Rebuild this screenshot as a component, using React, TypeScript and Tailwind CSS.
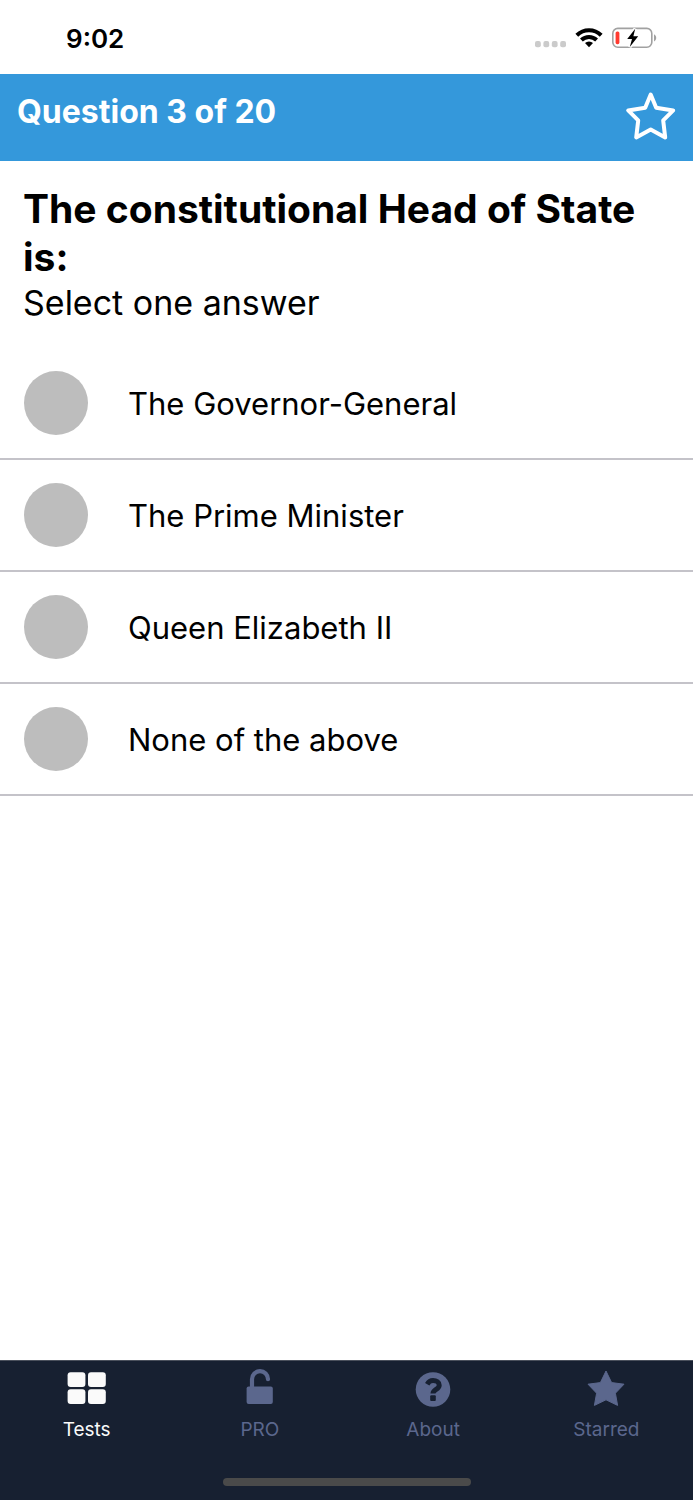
import { useState } from "react";

const answers = [
  "The Governor-General",
  "The Prime Minister",
  "Queen Elizabeth II",
  "None of the above",
];

function SignalDots() {
  return (
    <svg viewBox="0 0 32 8" className="h-2 w-8" fill="#cbcbcb" aria-hidden="true">
      <rect x="0" y="1" width="5.8" height="6.2" rx="2" />
      <rect x="8.4" y="1" width="5.8" height="6.2" rx="2" />
      <rect x="16.8" y="1" width="5.8" height="6.2" rx="2" />
      <rect x="25.2" y="1" width="5.8" height="6.2" rx="2" />
    </svg>
  );
}

function WifiIcon() {
  return (
    <svg viewBox="0 0 28 20" className="h-5 w-7" aria-hidden="true">
      <g fill="none" stroke="#000" strokeWidth="4">
        <path d="M1.8 7.2a17.4 17.4 0 0 1 24.4 0" />
        <path d="M6.4 12a10.9 10.9 0 0 1 15.2 0" />
      </g>
      <path d="M14 19.2l-4-4.2a5.8 5.8 0 0 1 8 0z" />
    </svg>
  );
}

function BatteryIcon() {
  return (
    <svg viewBox="0 0 46 24" className="h-6 w-[46px]" aria-hidden="true">
      <rect x="1.8" y="2.4" width="39" height="18.8" rx="5" fill="none" stroke="#a1a1a1" strokeWidth="1.6" />
      <path d="M43 8.2c1.4.7 2.2 2 2.2 3.6s-.8 2.9-2.2 3.6z" fill="#a1a1a1" />
      <rect x="4.6" y="5.4" width="3.8" height="12.8" rx="1.6" fill="#ff3b30" />
      <path
        d="M24.2 2.8L16.2 13h4.8L18.8 21l8.4-10.8h-4.8z"
        fill="#000"
        stroke="#fff"
        strokeWidth="3.4"
        paintOrder="stroke"
      />
    </svg>
  );
}

function StarOutlineIcon() {
  return (
    <svg viewBox="0 0 52 52" className="size-[52px]" aria-hidden="true">
      <path
        d="M25.7 4.6L31.2 17.8 48.2 20.4 38.2 30.4 40.2 47.4 25.7 39.4 11.2 47.4 13.2 30.4 3.2 20.4 20.2 17.8z"
        fill="none"
        stroke="#fff"
        strokeWidth="4"
        strokeLinejoin="round"
      />
    </svg>
  );
}

function GridIcon() {
  return (
    <svg viewBox="0 0 40 40" className="size-10" fill="currentColor" aria-hidden="true">
      <rect x="0.6" y="4.2" width="17.8" height="14.8" rx="3" />
      <rect x="21" y="4.2" width="17.8" height="14.8" rx="3" />
      <rect x="0.6" y="21.2" width="17.8" height="14.8" rx="3" />
      <rect x="21" y="21.2" width="17.8" height="14.8" rx="3" />
    </svg>
  );
}

function UnlockIcon() {
  return (
    <svg viewBox="0 0 40 40" className="size-10" fill="currentColor" aria-hidden="true">
      <path
        d="M12 20v-8.8a8 8 0 0 1 16 0"
        fill="none"
        stroke="currentColor"
        strokeWidth="4.2"
        strokeLinecap="round"
      />
      <rect x="6.6" y="18.6" width="26.2" height="17.4" rx="2" />
    </svg>
  );
}

function HelpIcon() {
  return (
    <svg viewBox="0 0 40 40" className="size-10" aria-hidden="true">
      <circle cx="20" cy="21.5" r="17.3" fill="currentColor" />
      <path
        d="M14.2 16.2c1.4-2.4 3.2-3.6 5.8-3.6 3.6 0 6.2 1.8 6.2 4.6 0 4.4-6.2 4-6.2 8.4"
        fill="none"
        stroke="#172031"
        strokeWidth="5"
      />
      <rect x="17.2" y="27.2" width="5.6" height="5.8" rx="1" fill="#172031" />
    </svg>
  );
}

function StarIcon() {
  return (
    <svg viewBox="0 0 40 40" className="size-10" aria-hidden="true">
      <path
        d="M20 3L25.6 14.6 38 16.2 29.4 25.2 31.6 37.4 20 31.8 8.4 37.4 10.6 25.2 2 16.2 14.4 14.6z"
        fill="currentColor"
        stroke="currentColor"
        strokeWidth="1"
        strokeLinejoin="round"
      />
    </svg>
  );
}

const tabs = [
  { label: "Tests", icon: GridIcon },
  { label: "PRO", icon: UnlockIcon },
  { label: "About", icon: HelpIcon },
  { label: "Starred", icon: StarIcon },
];

export default function App() {
  const [selected, setSelected] = useState<string | null>(null);
  const activeTab = "Tests";

  return (
    <div className="flex min-h-screen flex-col bg-white font-['Inter',sans-serif] text-black">
      <div className="flex h-[74px] items-center justify-between pt-[2px] pr-9 pl-[66px]">
        <span className="text-[26px] font-semibold">9:02</span>
        <div className="flex items-center gap-2">
          <div className="pt-3">
            <SignalDots />
          </div>
          <WifiIcon />
          <BatteryIcon />
        </div>
      </div>

      <header className="flex h-[87px] items-start justify-between bg-[#3498db] pr-4 pl-[17px] text-white">
        <h1 className="pt-[18px] text-[32px] leading-10 font-bold">Question 3 of 20</h1>
        <button type="button" aria-label="Star this question" className="pt-4">
          <StarOutlineIcon />
        </button>
      </header>

      <main className="flex-1 pt-6">
        <h2 className="px-[23px] text-[39px] leading-[48px] font-bold">
          The constitutional Head of State is:
        </h2>
        <p className="px-[23px] text-[34px] leading-[44px]">Select one answer</p>

        <div className="pt-[23px]">
          {answers.map((answer) => (
            <label
              key={answer}
              className="flex h-28 items-center gap-10 border-b-2 border-[#c4c3c9] pl-6"
            >
              <input
                type="radio"
                name="answer"
                value={answer}
                checked={selected === answer}
                onChange={() => setSelected(answer)}
                className="size-16 appearance-none rounded-full bg-[#bdbdbd] checked:bg-[#3498db]"
              />
              <span className="pt-[2px] text-[31px]">{answer}</span>
            </label>
          ))}
        </div>
      </main>

      <nav className="border-t border-[#4a505c] bg-[#172031] pb-[14px]">
        <div className="grid grid-cols-4">
          {tabs.map(({ label, icon: Icon }) => (
            <a
              key={label}
              href={`#${label.toLowerCase()}`}
              className={
                label === activeTab
                  ? "flex flex-col items-center gap-2 pt-[7px] text-[#fafafa]"
                  : "flex flex-col items-center gap-2 pt-[7px] text-[#5b678d]"
              }
            >
              <Icon />
              <span className="text-[19px] leading-7">{label}</span>
            </a>
          ))}
        </div>
        <div className="mx-auto mt-[34px] h-2 w-[248px] rounded-full bg-[#4a4a4a]" />
      </nav>
    </div>
  );
}
